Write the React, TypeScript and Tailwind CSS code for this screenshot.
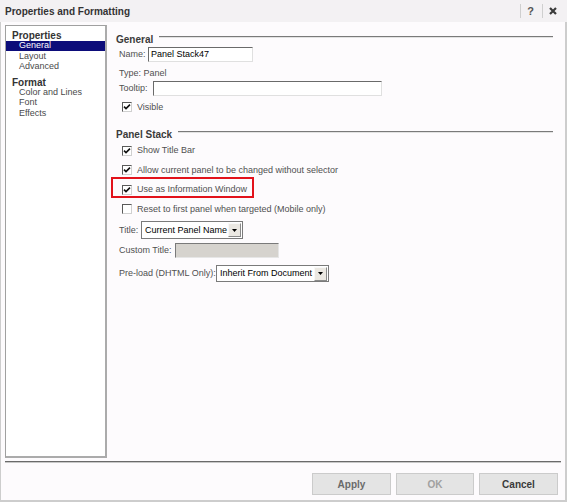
import React from "react";

const Checkbox = ({ checked }: { checked: boolean }) => (
  <div className="w-[10px] h-[10px] shrink-0 bg-white border border-[#5a5a5a] border-r-[#d0d0d0] border-b-[#d0d0d0] flex items-center justify-center">
    {checked && (
      <svg width="8" height="8" viewBox="0 0 8 8">
        <path d="M1 3.6 L3 5.6 L7 1.6" fill="none" stroke="#111" strokeWidth="1.6" />
      </svg>
    )}
  </div>
);

const DropButton = () => (
  <div className="w-[13px] h-[14px] bg-[#ebe8e2] border border-[#f8f8f8] border-r-[#8a8a8a] border-b-[#8a8a8a] flex items-center justify-center">
    <svg width="5" height="3" viewBox="0 0 5 3">
      <path d="M0 0 H5 L2.5 3 Z" fill="#000" />
    </svg>
  </div>
);

const SectionHeader = ({ title }: { title: string }) => (
  <div className="flex items-start h-[10px]">
    <span className="text-[10px] leading-[10px] font-bold text-[#3a3a3a]">{title}</span>
    <div className="flex-1 ml-[6px] mt-[1px] h-[2px] border-t border-[#7a7a7a] border-b border-b-[#e2e2e2]" />
  </div>
);

const checkRows = [
  { label: "Show Title Bar", checked: true },
  { label: "Allow current panel to be changed without selector", checked: true },
  { label: "Use as Information Window", checked: true, highlight: true },
  { label: "Reset to first panel when targeted (Mobile only)", checked: false },
];

const listItems = [
  { label: "Properties", heading: true },
  { label: "General", selected: true },
  { label: "Layout" },
  { label: "Advanced" },
  { label: "Format", heading: true, gap: true },
  { label: "Color and Lines" },
  { label: "Font" },
  { label: "Effects" },
];

export default function App() {
  return (
    <div className="w-[567px] h-[502px] flex flex-col bg-[#fdfbfd] font-['Liberation_Sans',Arial,sans-serif] text-[#505050]">
      {/* title bar */}
      <div className="h-[22px] shrink-0 bg-[#f3f1f3] flex items-center justify-between pl-[5px] pr-[10px]">
        <span className="text-[10px] font-bold text-[#333]">Properties and Formatting</span>
        <div className="flex items-center">
          <div className="w-px h-[14px] bg-[#cfcfcf]" />
          <span className="ml-[6px] text-[11px] font-bold text-[#555] leading-none">?</span>
          <div className="ml-[8px] w-px h-[14px] bg-[#cfcfcf]" />
          <svg className="ml-[6px]" width="8" height="8" viewBox="0 0 8 8">
            <path d="M1 1 L7 7 M7 1 L1 7" stroke="#3a3a3a" strokeWidth="2.2" />
          </svg>
        </div>
      </div>

      <div className="flex-1 flex flex-col border-l border-r-2 border-b-2 border-[#cdcdcd]">
        {/* body */}
        <div className="h-[439px] flex">
          <div className="pt-[3px] pl-[4px]">
            <div className="w-[102px] h-[433px] bg-white border border-[#a0a0a0] border-r-2 border-b-2 border-r-[#ababab] border-b-[#ababab] pt-[4px]">
              {listItems.map((item) => (
                <div
                  key={item.label}
                  className={`h-[10.5px] flex items-center whitespace-nowrap ${item.gap ? "mt-[4.75px]" : ""} ${
                    item.heading ? "pl-[6px] text-[10px] font-bold text-[#333]" : "pl-[13px] text-[9px] text-[#4a4a4a]"
                  } ${item.selected ? "bg-[#0c0c7a] text-white" : ""}`}
                >
                  {item.label}
                </div>
              ))}
            </div>
          </div>

          <div className="flex-1 flex flex-col ml-[9px] pr-[12px] pt-[13px] text-[9px] leading-none">
            <SectionHeader title="General" />

            <div className="mt-[2px] h-[15px] flex items-center pl-[3px]">
              <span className="w-[29px]">Name:</span>
              <div className="w-[105px] h-[15px] bg-white border border-[#6a6a6a] border-r-[#e0e0e0] border-b-[#e0e0e0] flex items-center pl-[2px] text-black">
                Panel Stack47
              </div>
            </div>

            <div className="mt-[6px] h-[11px] flex items-center pl-[3px]">Type: Panel</div>

            <div className="mt-[2px] h-[15px] flex items-center pl-[3px]">
              <span className="w-[34px]">Tooltip:</span>
              <div className="w-[229px] h-[15px] bg-white border border-[#6a6a6a] border-r-[#e0e0e0] border-b-[#e0e0e0]" />
            </div>

            <div className="mt-[5px] h-[12px] flex items-center pl-[6px] gap-[5px]">
              <Checkbox checked />
              <span>Visible</span>
            </div>

            <div className="mt-[17px]">
              <SectionHeader title="Panel Stack" />
            </div>

            <div className="mt-[1px] flex flex-col">
              {checkRows.map((row) => (
                <div key={row.label} className="relative h-[19.5px] flex items-center pl-[6px] gap-[5px] whitespace-nowrap">
                  <Checkbox checked={row.checked} />
                  <span>{row.label}</span>
                  {row.highlight && (
                    <div className="absolute left-[-5px] top-[-3px] w-[143px] h-[21px] border-2 border-[#e2121b]" />
                  )}
                </div>
              ))}
            </div>

            <div className="mt-[2px] h-[18px] flex items-center pl-[3px]">
              <span className="w-[22px]">Title:</span>
              <div className="w-[102px] h-[18px] bg-white border border-[#7a7a7a] flex items-center justify-between pl-[3px] pr-[1px] text-black">
                <span>Current Panel Name</span>
                <DropButton />
              </div>
            </div>

            <div className="mt-[4px] h-[15px] flex items-center pl-[3px]">
              <span className="w-[56px] whitespace-nowrap">Custom Title:</span>
              <div className="w-[104px] h-[15px] bg-[#d6d3ce] border border-[#7a7a7a] border-r-[#e6e6e6] border-b-[#e6e6e6]" />
            </div>

            <div className="mt-[7px] h-[17px] flex items-center pl-[3px]">
              <span className="w-[97px] whitespace-nowrap">Pre-load (DHTML Only):</span>
              <div className="w-[113px] h-[17px] bg-white border border-[#7a7a7a] flex items-center justify-between pl-[3px] pr-[1px] text-black whitespace-nowrap">
                <span>Inherit From Document</span>
                <DropButton />
              </div>
            </div>
          </div>
        </div>

        {/* separator */}
        <div className="ml-[4px] mr-[4px] h-[2px] border-t border-[#6a6a6a] border-b border-b-[#c8c8c8]" />

        {/* buttons */}
        <div className="flex-1 flex justify-end items-start pt-[10px] pr-[7px] gap-[5px] text-[10px] font-bold">
          <button className="w-[79px] h-[22px] bg-[#e4e4e4] border border-[#cbcbcb] text-[#6a6a6a]">Apply</button>
          <button className="w-[78px] h-[22px] bg-[#e4e4e4] border border-[#cbcbcb] text-[#a0a0a0]">OK</button>
          <button className="w-[79px] h-[22px] bg-[#e4e4e4] border border-[#cbcbcb] text-[#3a3a3a]">Cancel</button>
        </div>
      </div>
    </div>
  );
}
